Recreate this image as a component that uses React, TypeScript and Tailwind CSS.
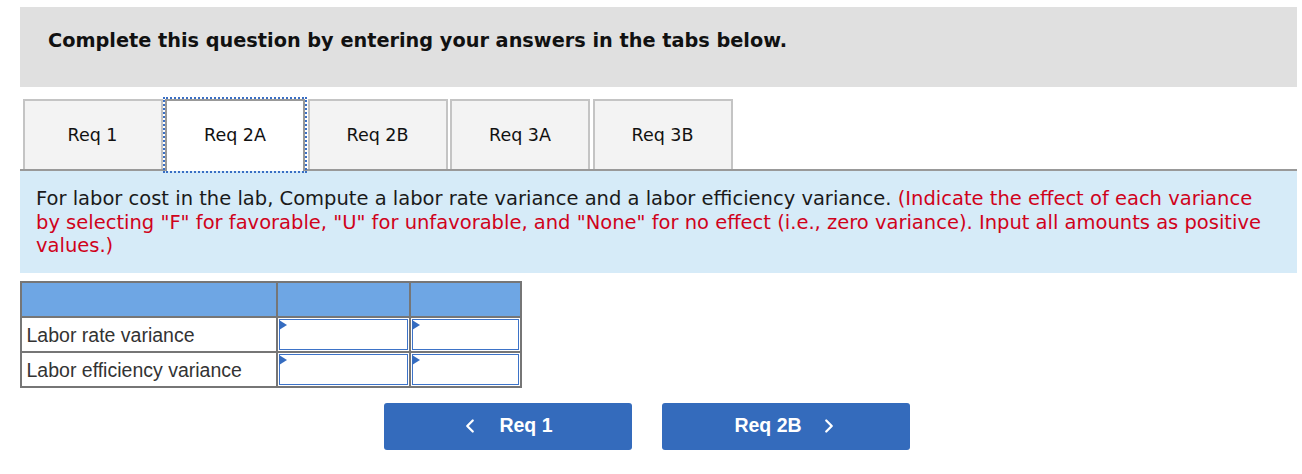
import { ChevronLeft, ChevronRight } from "lucide-react";

const tabs = ["Req 1", "Req 2A", "Req 2B", "Req 3A", "Req 3B"];
const active = "Req 2A";

const rows = ["Labor rate variance", "Labor efficiency variance"];

function AnswerCell() {
  return (
    <td className="border-2 border-[#767676] p-0 h-[35px]">
      <div className="relative h-full w-full p-[1px]">
        <div className="h-full w-full border border-[#3d73c8] bg-white" />
        <span className="absolute left-[1px] top-[2px] w-0 h-0 border-y-[5px] border-y-transparent border-l-[8px] border-l-[#356cc0]" />
      </div>
    </td>
  );
}

export default function App() {
  return (
    <div className="w-[1302px] h-[474px] bg-white pt-[7px] pl-[20px] pr-[5px] font-['DejaVu_Sans',Verdana,sans-serif] text-[#111]">
      {/* heading */}
      <div className="h-[80px] bg-[#e0e0e0] pl-[28px] pt-[21px]">
        <h1 className="text-[19.3px] font-bold leading-[26px]">
          Complete this question by entering your answers in the tabs below.
        </h1>
      </div>

      {/* tabs */}
      <div className="mt-[12px] flex items-end gap-[2.5px] pl-[2.5px] border-b-2 border-[#999]">
        {tabs.map((t) =>
          t === active ? (
            <div
              key={t}
              className="w-[140px] h-[72px] -mb-[2px] flex items-center justify-center bg-white border-2 border-b-0 border-[#999] outline-2 outline-dotted outline-[#3a6fc4] text-[17.5px] pb-[2px]"
            >
              {t}
            </div>
          ) : (
            <div
              key={t}
              className="w-[140px] h-[70px] flex items-center justify-center bg-[#f3f3f3] border-2 border-b-0 border-[#c4c4c4] text-[17.5px]"
            >
              {t}
            </div>
          )
        )}
      </div>

      {/* instructions */}
      <div className="bg-[#d6ebf8] pl-[16px] pr-[20px] pt-[16px] pb-[15px] text-[19.5px] leading-[23.5px] text-[#1a1a1a]">
        For labor cost in the lab, Compute a labor rate variance and a labor efficiency variance.{" "}
        <span className="text-[#d0021b]">
          (Indicate the effect of each variance by selecting "F" for favorable, "U" for unfavorable, and
          "None" for no effect (i.e., zero variance). Input all amounts as positive values.)
        </span>
      </div>

      {/* answer table */}
      <table className="mt-[8px] -ml-[0.5px] border-collapse font-['Liberation_Sans',Arial,sans-serif] text-[19.5px] text-[#333]">
        <tbody>
          <tr className="bg-[#6ea6e4] h-[35px]">
            <td className="border-2 border-[#767676] w-[256px]" />
            <td className="border-2 border-[#767676] w-[133px]" />
            <td className="border-2 border-[#767676] w-[111px]" />
          </tr>
          {rows.map((r) => (
            <tr key={r} className="h-[35px]">
              <td className="border-2 border-[#767676] px-[5px] leading-[24px] pt-[1px]">{r}</td>
              <AnswerCell />
              <AnswerCell />
            </tr>
          ))}
        </tbody>
      </table>

      {/* nav buttons */}
      <div className="mt-[15px] flex gap-[30px] pl-[364px] font-['Liberation_Sans',Arial,sans-serif]">
        <button className="w-[248px] h-[47px] rounded-[3px] bg-[#346bbc] text-white text-[19.5px] font-bold flex items-center justify-center gap-[18px] pr-[4px]">
          <ChevronLeft size={22} strokeWidth={2.5} />
          <span>Req 1</span>
        </button>
        <button className="w-[248px] h-[47px] rounded-[3px] bg-[#346bbc] text-white text-[19.5px] font-bold flex items-center justify-center gap-[16px] pl-[2px]">
          <span>Req 2B</span>
          <ChevronRight size={22} strokeWidth={2.5} />
        </button>
      </div>
    </div>
  );
}
